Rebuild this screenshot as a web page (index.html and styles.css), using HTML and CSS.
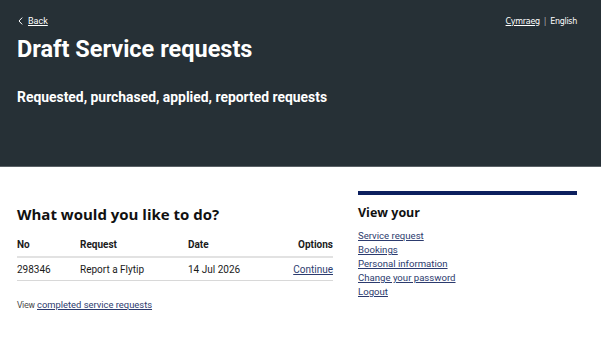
FILE: index.html
```html
<!DOCTYPE html>
<html lang="en">
<head>
  <meta charset="UTF-8" />
  <meta name="viewport" content="width=device-width, initial-scale=1" />
  <title>Draft Service requests</title>
  <link rel="stylesheet" href="styles.css">
</head>
<body>
  <header class="hero">
    <div class="hero-top">
      <div class="back">
        <svg class="chev" width="5" height="8" viewBox="0 0 5 8"><path d="M4.2 0.6 L1 4 L4.2 7.4" fill="none" stroke="#fff" stroke-width="1"/></svg>
        <a href="#">Back</a>
      </div>
      <div class="lang">
        <a href="#">Cymraeg</a>
        <span class="sep">|</span>
        <span>English</span>
      </div>
    </div>
    <h1 class="hero-title">Draft Service requests</h1>
    <p class="hero-sub">Requested, purchased, applied, reported requests</p>
  </header>

  <main class="page">
    <section class="content">
      <h2 class="section-title">What would you like to do?</h2>
      <table class="requests">
        <thead>
          <tr>
            <th class="col-no">No</th>
            <th class="col-req">Request</th>
            <th class="col-date">Date</th>
            <th class="col-opt">Options</th>
          </tr>
        </thead>
        <tbody>
          <tr>
            <td>298346</td>
            <td>Report a Flytip</td>
            <td>14 Jul 2026</td>
            <td class="col-opt"><a href="#">Continue</a></td>
          </tr>
        </tbody>
      </table>
      <p class="view-completed">View <a href="#">completed service requests</a></p>
    </section>

    <aside class="sidebar">
      <h3 class="sidebar-title">View your</h3>
      <ul class="sidebar-links">
        <li><a href="#">Service request</a></li>
        <li><a href="#">Bookings</a></li>
        <li><a href="#">Personal information</a></li>
        <li><a href="#">Change your password</a></li>
        <li><a href="#">Logout</a></li>
      </ul>
    </aside>
  </main>
</body>
</html>
```

FILE: styles.css
```css
body {
  margin: 0;
  padding: 0;
  font-family: 'Roboto', sans-serif;
  background: #fff;
  color: #1b1b1b;
}

a {
  color: #2c3b6e;
}

.hero {
  background-color: #263036;
  color: #fff;
  height: 167px;
  box-sizing: border-box;
  padding: 12px 24px 0 17px;
  border-bottom: 1px solid #5a6166;
}

.hero-top {
  display: flex;
  justify-content: space-between;
  align-items: center;
  height: 18px;
}

.back {
  font-size: 9px;
  display: flex;
  align-items: center;
  gap: 5px;
}

.back a {
  color: #fff;
}

.chev {
  margin-left: 1px;
}

.lang {
  font-family: 'DejaVu Sans', sans-serif;
  font-size: 8px;
  letter-spacing: -0.3px;
  display: flex;
  align-items: center;
  gap: 4px;
  color: #fff;
}

.lang a {
  color: #fff;
}

.lang .sep {
  color: #aaa;
}

.hero-title {
  margin: 4px 0 0;
  font-size: 23.5px;
  font-weight: 700;
  line-height: 30px;
}

.hero-sub {
  margin: 23px 0 0;
  font-size: 13.9px;
  font-weight: 700;
  line-height: 20px;
}

.page {
  display: flex;
  gap: 25px;
  padding: 24px 24px 0 17px;
}

.content {
  width: 316px;
}

.section-title {
  font-family: 'Open Sans', sans-serif;
  font-size: 15px;
  font-weight: 700;
  margin: 11px 0 0;
  line-height: 24px;
  color: #111;
}

.requests {
  width: 100%;
  border-collapse: collapse;
  margin-top: 7px;
  font-size: 10px;
}

.requests th,
.requests td {
  text-align: left;
  padding: 0;
  height: 23px;
  border-bottom: 1px solid #d8d8d8;
  vertical-align: middle;
}

.requests th {
  font-weight: 700;
  border-bottom-width: 2px;
  border-color: #e2e2e2;
}

.requests td {
  height: 22px;
}

.requests .col-no { width: 63px; }
.requests .col-req { width: 108px; }
.requests .col-opt { text-align: right; }

.view-completed {
  font-family: 'DejaVu Sans', sans-serif;
  font-size: 8px;
  letter-spacing: -0.3px;
  margin: 18px 0 0;
  color: #444;
}

.view-completed a {
  font-family: 'Roboto', sans-serif;
  font-size: 9.4px;
  letter-spacing: 0;
}

.sidebar {
  width: 219px;
  border-top: 4px solid #0c1f5e;
}

.sidebar-title {
  font-family: 'Open Sans', sans-serif;
  font-size: 12.5px;
  font-weight: 700;
  margin: 9px 0 0;
  line-height: 18px;
  color: #111;
}

.sidebar-links {
  list-style: none;
  margin: 7px 0 0;
  padding: 0;
  font-size: 9.6px;
  line-height: 14px;
}
```
